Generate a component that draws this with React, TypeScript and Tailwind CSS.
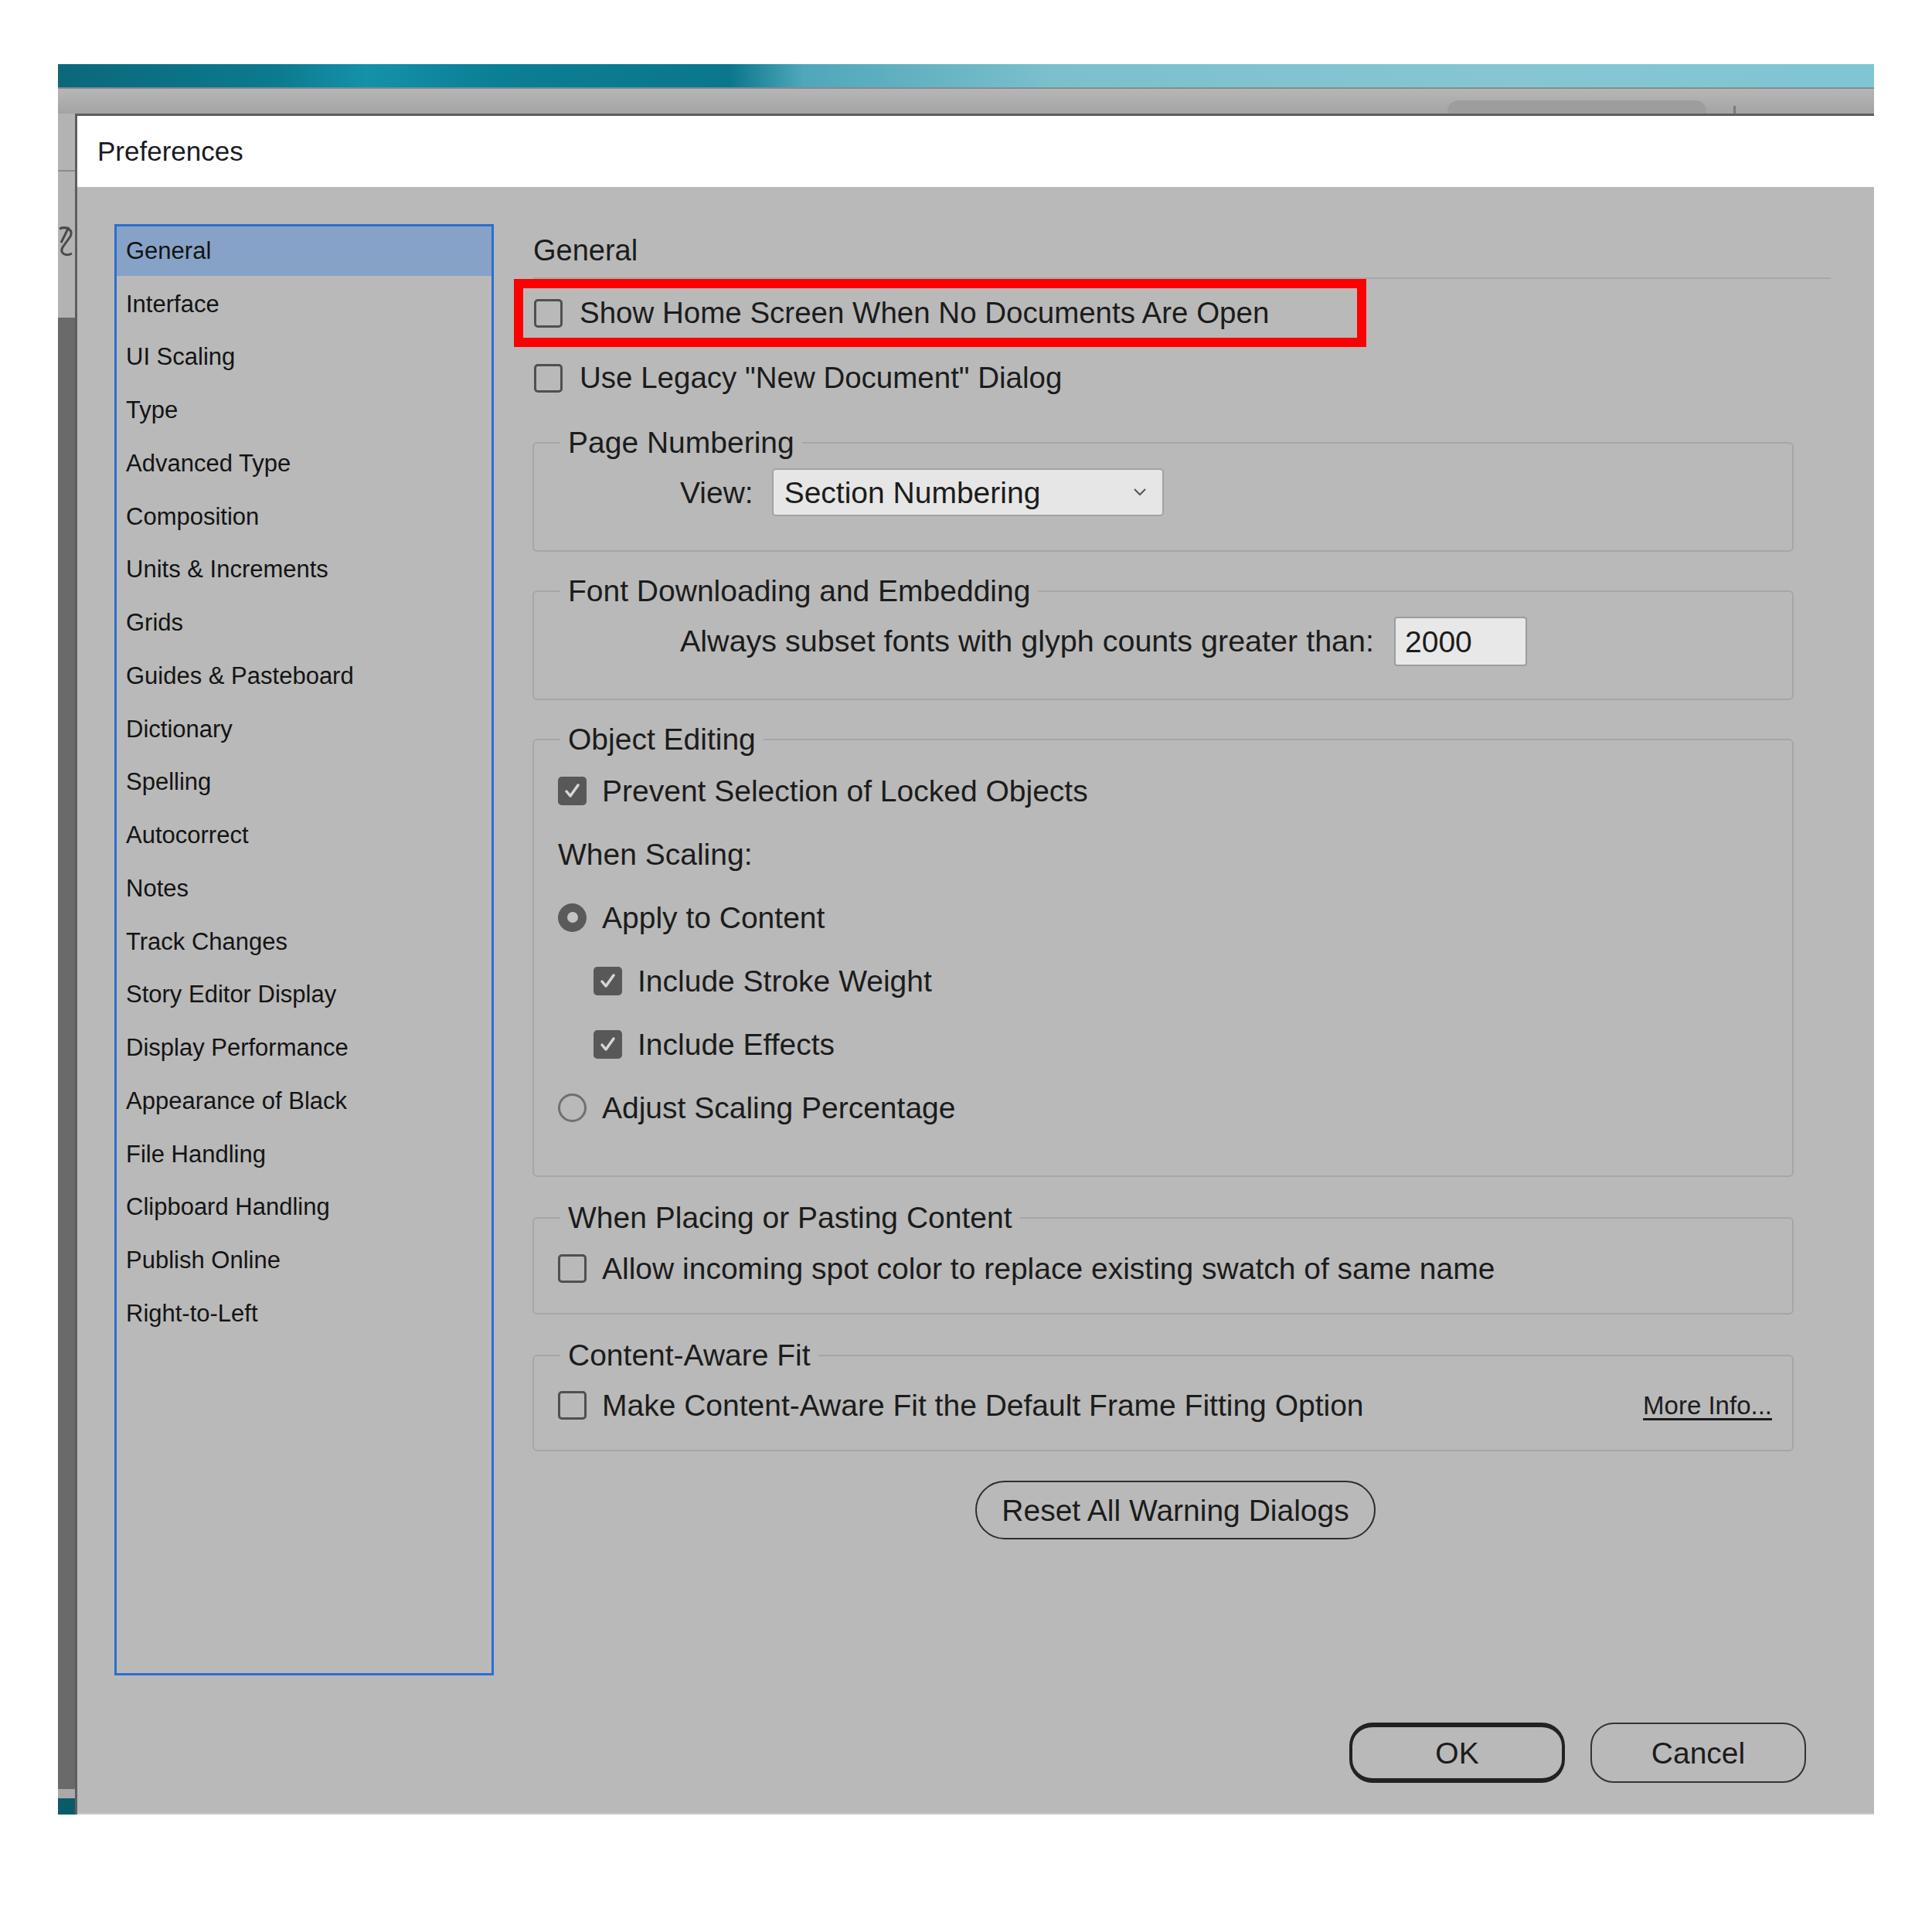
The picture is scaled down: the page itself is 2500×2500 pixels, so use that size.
import React from 'react';

const SIDEBAR = [
  'General',
  'Interface',
  'UI Scaling',
  'Type',
  'Advanced Type',
  'Composition',
  'Units & Increments',
  'Grids',
  'Guides & Pasteboard',
  'Dictionary',
  'Spelling',
  'Autocorrect',
  'Notes',
  'Track Changes',
  'Story Editor Display',
  'Display Performance',
  'Appearance of Black',
  'File Handling',
  'Clipboard Handling',
  'Publish Online',
  'Right-to-Left',
];

function CheckBox({ checked }: { checked?: boolean }) {
  if (checked) {
    return (
      <svg width="37" height="37" viewBox="0 0 37 37" className="shrink-0">
        <rect x="0" y="0" width="37" height="37" rx="5" fill="#585858" />
        <polyline points="11,19 16,25 26,11" fill="none" stroke="#d6d6d6" strokeWidth="3.5" strokeLinecap="round" strokeLinejoin="round" />
      </svg>
    );
  }
  return <div className="w-[37px] h-[37px] shrink-0 rounded-[5px] border-[3px] border-[#505050]" />;
}

function Radio({ checked }: { checked?: boolean }) {
  if (checked) {
    return (
      <div className="w-[37px] h-[37px] shrink-0 rounded-full bg-[#5a5a5a] flex items-center justify-center">
        <div className="w-[14px] h-[14px] rounded-full bg-[#c4c4c4]" />
      </div>
    );
  }
  return <div className="w-[37px] h-[37px] shrink-0 rounded-full border-[3px] border-[#707070]" />;
}

function Group({ title, className, children }: { title: string; className?: string; children: React.ReactNode }) {
  return (
    <fieldset className={`ml-[-1px] w-[1632px] border-2 border-[#a6a6a6] rounded-[6px] ${className ?? ''}`}>
      <legend className="ml-[34px] px-[10px] text-[39px] leading-[44px] text-[#1c1c1c]">{title}</legend>
      {children}
    </fieldset>
  );
}

function Option({ box, label, indent }: { box: React.ReactNode; label: string; indent?: boolean }) {
  return (
    <div className={`h-[56px] flex items-center gap-[20px] ${indent ? 'pl-[46px]' : ''}`}>
      {box}
      <span className="text-[39px] leading-none text-[#1c1c1c]">{label}</span>
    </div>
  );
}

export default function App() {
  return (
    <div className="w-[2500px] h-[2500px] bg-white font-['Liberation_Sans',Arial,sans-serif]">
      <div className="pt-[83px] pl-[75px] w-[2425px]">
        {/* desktop banner */}
        <div className="h-[32px] border-b-2 border-[#8a8a8a] bg-[linear-gradient(90deg,#0b687b_0%,#0c7a8f_12%,#1492aa_17%,#0b7f95_24%,#0a778d_37%,#4fa7b9_41%,#7cc0cd_55%,#86c6d3_80%,#7fc5d4_100%)]" />

        {/* app bar strip */}
        <div className="h-[32px] flex items-end bg-[linear-gradient(180deg,#b6b6b6,#a4a4a4)]">
          <div className="ml-[1798px] w-[335px] h-[17px] rounded-t-[14px] bg-[#9d9d9d]" />
          <div className="ml-[35px] w-[3px] h-[10px] bg-[#7a7a7a]" />
        </div>

        <div className="flex">
          {/* sliver of the app window on the left */}
          <div className="w-[22px] flex flex-col">
            <div className="h-[264px] bg-[#b3b3b3] flex flex-col">
              <div className="mt-[73px] h-[2px] bg-[#8a8a8a]" />
              <svg width="22" height="44" viewBox="0 0 22 44" className="mt-[68px]">
                <path d="M2 6 C 12 2, 20 8, 16 16 L 6 30 C 2 38, 10 42, 18 38" fill="none" stroke="#4a4a4a" strokeWidth="3" />
                <path d="M14 4 L 4 24" fill="none" stroke="#4a4a4a" strokeWidth="3" />
              </svg>
            </div>
            <div className="h-[1904px] bg-[#6a6a6a]" />
            <div className="h-[12px] bg-[#a9a9a9]" />
            <div className="h-[21px] bg-[#0b5a6a]" />
          </div>

          {/* dialog */}
          <div className="w-[2328px] border-l-[3px] border-t-[3px] border-[#5e5e5e]">
            <div className="h-[92px] bg-white flex items-center pl-[26px]">
              <span className="text-[35px] text-[#1a1a24]">Preferences</span>
            </div>

            <div className="bg-[#b9b9b9] h-[2106px] border-b-2 border-[#cacaca] flex flex-col pt-[48px] pl-[48px]">
              <div className="flex h-[1878px]">
                {/* category list */}
                <div className="w-[491px] h-[1878px] border-[3px] border-[#2a6fd0] flex flex-col gap-[4.75px]">
                  {SIDEBAR.map((item, i) => (
                    <div
                      key={item}
                      className={`h-[64px] shrink-0 flex items-center pl-[12px] text-[31px] text-[#141414] ${i === 0 ? 'bg-[#87a2c7]' : ''}`}
                    >
                      {item}
                    </div>
                  ))}
                </div>

                {/* settings */}
                <div className="ml-[51px] w-[1680px] flex flex-col text-[#1c1c1c]">
                  <div className="h-[71px] w-[1679px] flex items-center border-b-2 border-[#a8a8a8]">
                    <span className="text-[38px]">General</span>
                  </div>

                  <div className="ml-[-25px] w-[1103px] h-[88px] border-[12px] border-[#ff0000] flex items-center pl-[14px] gap-[22px]">
                    <CheckBox />
                    <span className="text-[38.5px] leading-none">Show Home Screen When No Documents Are Open</span>
                  </div>

                  <div className="h-[80px] flex items-center pl-[1px] gap-[22px]">
                    <CheckBox />
                    <span className="text-[38.5px] leading-none">Use Legacy &quot;New Document&quot; Dialog</span>
                  </div>

                  <Group title="Page Numbering" className="mt-[22px] pb-[44px]">
                    <div className="mt-[11px] pl-[189px] flex items-center gap-[24px]">
                      <span className="text-[39px] leading-none">View:</span>
                      <div className="w-[507px] h-[62px] rounded-[5px] border-2 border-[#a2a2a2] bg-[#e6e6e6] flex items-center justify-between pl-[14px] pr-[20px]">
                        <span className="text-[39px] leading-none">Section Numbering</span>
                        <svg width="18" height="12" viewBox="0 0 18 12">
                          <polyline points="2,2 9,9 16,2" fill="none" stroke="#555555" strokeWidth="2" />
                        </svg>
                      </div>
                    </div>
                  </Group>

                  <Group title="Font Downloading and Embedding" className="mt-[29px] pb-[42px]">
                    <div className="mt-[11px] pl-[189px] flex items-center gap-[26px]">
                      <span className="text-[39.5px] leading-none">Always subset fonts with glyph counts greater than:</span>
                      <div className="w-[172px] h-[64px] rounded-[4px] border-2 border-[#9c9c9c] bg-[#e8e8e8] flex items-center pl-[12px]">
                        <span className="text-[39px] leading-none">2000</span>
                      </div>
                    </div>
                  </Group>

                  <Group title="Object Editing" className="mt-[29px] pb-[60px]">
                    <div className="mt-[16px] pl-[31px] flex flex-col gap-[26px]">
                      <Option box={<CheckBox checked />} label="Prevent Selection of Locked Objects" />
                      <div className="h-[56px] flex items-center">
                        <span className="text-[39px] leading-none">When Scaling:</span>
                      </div>
                      <Option box={<Radio checked />} label="Apply to Content" />
                      <Option box={<CheckBox checked />} label="Include Stroke Weight" indent />
                      <Option box={<CheckBox checked />} label="Include Effects" indent />
                      <Option box={<Radio />} label="Adjust Scaling Percentage" />
                    </div>
                  </Group>

                  <Group title="When Placing or Pasting Content" className="mt-[31px] pb-[30px]">
                    <div className="mt-[15px] pl-[31px]">
                      <Option box={<CheckBox />} label="Allow incoming spot color to replace existing swatch of same name" />
                    </div>
                  </Group>

                  <Group title="Content-Aware Fit" className="mt-[31px] pb-[30px]">
                    <div className="mt-[14px] pl-[31px] pr-[26px] flex items-center justify-between">
                      <Option box={<CheckBox />} label="Make Content-Aware Fit the Default Frame Fitting Option" />
                      <span className="text-[33px] leading-none underline decoration-[3px] underline-offset-[5px]">More Info...</span>
                    </div>
                  </Group>

                  <div className="mt-[38px] w-[1632px] flex justify-center pl-[30px]">
                    <button className="w-[518px] h-[76px] rounded-[38px] border-2 border-[#2e2e2e] text-[39px] leading-none text-[#1c1c1c]">
                      Reset All Warning Dialogs
                    </button>
                  </div>
                </div>
              </div>

              {/* footer buttons */}
              <div className="mt-[61px] h-[78px] flex justify-end gap-[33px] pr-[88px]">
                <button className="w-[279px] h-[78px] rounded-[30px] border-y-[6px] border-x-[4px] border-[#222222] text-[39px] leading-none text-[#1c1c1c]">
                  OK
                </button>
                <button className="w-[279px] h-[78px] rounded-[30px] border-2 border-[#333333] text-[39px] leading-none text-[#1c1c1c]">
                  Cancel
                </button>
              </div>
            </div>
          </div>
        </div>
      </div>
    </div>
  );
}
